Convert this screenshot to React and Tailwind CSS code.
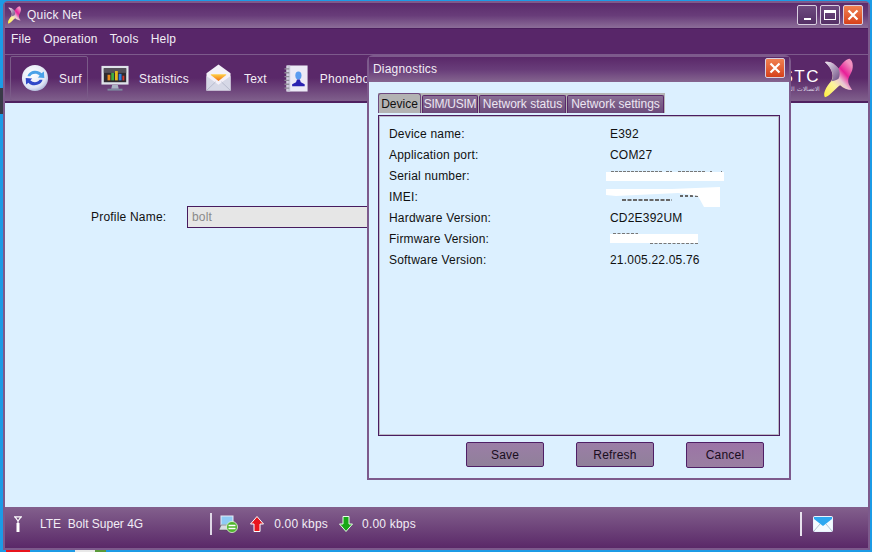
import { useId } from 'react';

function QuickNetLogo({ className }) {
  const id = useId();
  const armId = `${id}arm`;
  return (
    <svg viewBox="0 0 40 50" className={className}>
      <defs>
        <linearGradient id={id} x1="0.1" y1="1" x2="0.85" y2="0.1">
          <stop offset="0" stopColor="#fff04a" />
          <stop offset="0.35" stopColor="#fbf3a0" />
          <stop offset="0.55" stopColor="#e8c4d4" />
          <stop offset="0.75" stopColor="#e81f98" />
          <stop offset="1" stopColor="#f290c0" />
        </linearGradient>
        <linearGradient id={armId} x1="0" y1="0" x2="1" y2="1">
          <stop offset="0" stopColor="#efe8f2" />
          <stop offset="1" stopColor="#6a4a80" />
        </linearGradient>
      </defs>
      <path d="M3 5 C10 3 16 8 20 13 C24 8 29 1 34 1 C39 4 39 14 35 20 C33 24 31 27 33 33 L37 40 C31 40 26 38 22 34 C16 38 10 47 3 49 C0 44 5 36 10 30 C15 24 13 14 3 5 Z" fill={`url(#${id})`} />
      <path d="M3 5 C10 3 16 8 20 13 C22 18 22 22 20 26 C17 28 14 29 11 29 C15 23 13 14 3 5 Z" fill={`url(#${armId})`} />
    </svg>
  );
}

function SyncIcon() {
  return (
    <svg viewBox="0 0 30 30" className="w-[28px] h-[28px] -ml-[1px]">
      <defs>
        <radialGradient id="syncBall" cx="0.4" cy="0.35" r="0.75">
          <stop offset="0" stopColor="#ffffff" />
          <stop offset="0.7" stopColor="#dfe6f5" />
          <stop offset="1" stopColor="#9aa6cf" />
        </radialGradient>
      </defs>
      <circle cx="15" cy="15" r="14" fill="url(#syncBall)" />
      <path d="M7 13 C8 7 18 5 22 10 L24.5 8 L25 15 L18 14.5 L20 12.5 C17 9.5 12 10 10 13 Z" fill="#4aa2e8" />
      <path d="M23 17 C22 23 12 25 8 20 L5.5 22 L5 15 L12 15.5 L10 17.5 C13 20.5 18 20 20 17 Z" fill="#2f49c8" />
    </svg>
  );
}

function MonitorIcon() {
  return (
    <svg viewBox="0 0 30 28" className="w-[28px] h-[27px]">
      <rect x="0.5" y="0.5" width="29" height="20" fill="#dfe3ea" />
      <rect x="3" y="3" width="24" height="15" fill="#2e2a30" />
      <rect x="3" y="3" width="24" height="5" fill="#55505a" />
      <rect x="7" y="10" width="3" height="6" fill="#e88a1c" />
      <rect x="11" y="8" width="3" height="8" fill="#3fae3f" />
      <rect x="15" y="6" width="3" height="10" fill="#e8b81c" />
      <rect x="19" y="9" width="3" height="7" fill="#2f7de0" />
      <rect x="23" y="11" width="2" height="5" fill="#d8352c" />
      <path d="M12 21 H18 L19 25 H11 Z" fill="#aab4c4" />
      <rect x="7" y="25" width="16" height="2" fill="#7f8aa0" />
    </svg>
  );
}

function MailOpenIcon() {
  return (
    <svg viewBox="0 0 26 28" className="w-[25px] h-[28px]">
      <defs>
        <linearGradient id="mailFold" x1="0" y1="0" x2="0" y2="1">
          <stop offset="0" stopColor="#ffd24a" />
          <stop offset="1" stopColor="#f0700f" />
        </linearGradient>
      </defs>
      <path d="M13 0 L25.5 9 V27 H0.5 V9 Z" fill="#f3f0f8" />
      <path d="M5 10 H21 V11 L13 17 L5 11 Z" fill="url(#mailFold)" />
      <path d="M0.5 12 L13 21 L25.5 12 V27 H0.5 Z" fill="#d6d8e6" />
      <path d="M0.5 27 L10 18 M25.5 27 L16 18" stroke="#aeb2c6" strokeWidth="0.8" />
    </svg>
  );
}

function PhonebookIcon() {
  return (
    <svg viewBox="0 0 26 28" className="w-[26px] h-[27px]">
      <rect x="3" y="0.5" width="22" height="27" fill="#eceaf6" />
      <rect x="4" y="0.5" width="3" height="27" fill="#c8c8d8" />
      <path d="M1 4 H6 M1 8 H6 M1 12 H6 M1 16 H6 M1 20 H6 M1 24 H6" stroke="#8d8a96" strokeWidth="1.4" />
      <ellipse cx="15.5" cy="11" rx="3.2" ry="4.2" fill="#5b9cf0" />
      <path d="M14 15 H17 L18 18 L22 20 V22 H9 V20 L13 18 Z" fill="#2a22b0" />
    </svg>
  );
}

function NetworkIcon() {
  return (
    <svg viewBox="0 0 20 18" className="w-[20px] h-[18px]">
      <rect x="3" y="1" width="12" height="9" fill="#8ecbf5" stroke="#e8eef5" strokeWidth="1" />
      <path d="M1 15 L3 10 H15 L16 15 Z" fill="#d8dce2" stroke="#444" strokeWidth="0.5" />
      <circle cx="14" cy="12" r="5.5" fill="#4fb52c" stroke="#e8f5df" strokeWidth="0.8" />
      <path d="M10.5 10.5 H17.5 M10.5 13.5 H17.5" stroke="#fff" strokeWidth="1.4" />
    </svg>
  );
}

function Arrow({ down, color, edge }) {
  return (
    <svg viewBox="0 0 14 16" className="w-[14px] h-[16px]">
      <path
        d={down ? 'M4 0.5 H10 V8 H13.5 L7 15.5 L0.5 8 H4 Z' : 'M7 0.5 L13.5 8 H10 V15.5 H4 V8 H0.5 Z'}
        fill={color}
        stroke={edge}
        strokeWidth="1"
      />
    </svg>
  );
}

function WinButton({ children, close }) {
  return (
    <div className={`w-[20px] h-[20px] rounded-[2px] border border-[#d9cfe0] flex items-center justify-center ${close ? 'bg-gradient-to-b from-[#f08050] to-[#d6401a]' : 'bg-gradient-to-b from-[#6d4a7e] to-[#553066]'}`}>
      {children}
    </div>
  );
}

function CloseGlyph() {
  return (
    <svg viewBox="0 0 12 12" className="w-[12px] h-[12px]">
      <path d="M1.5 1.5 L10.5 10.5 M10.5 1.5 L1.5 10.5" stroke="#fff" strokeWidth="2.2" />
    </svg>
  );
}

// white scribbles over the private values, a few pixels of the text still show
function Redaction({ kind }) {
  if (kind === 'serial') {
    return (
      <svg viewBox="0 0 118 12" className="w-[118px] h-[12px] -ml-[4px]">
        <path d="M5 1.5 H56 M60 1.5 H66 M72 1.5 H100 M104 1.5 H106 M115 1.5 H116" stroke="#777" strokeWidth="1" strokeDasharray="3 1" />
        <rect x="0" y="2" width="118" height="9" fill="#fff" />
      </svg>
    );
  }
  if (kind === 'imei') {
    return (
      <svg viewBox="0 0 116 21" className="w-[116px] h-[21px] -ml-[4px] -my-[5px] relative top-[1px]">
        <path d="M16 13 H66" stroke="#666" strokeWidth="2" strokeDasharray="4 1.5" />
        <path d="M74 9 H100" stroke="#666" strokeWidth="2" strokeDasharray="3 2" />
        <path d="M0 2 L66 2 L114 0 L114 20 L98 20 L92 9 L72 6 L10 9 L0 8 Z" fill="#fff" />
      </svg>
    );
  }
  return (
    <svg viewBox="0 0 88 13" className="w-[88px] h-[13px]">
      <path d="M3 1.5 H28 M40 11.5 H88" stroke="#777" strokeWidth="1" strokeDasharray="3 1.5" />
      <rect x="0" y="2" width="88" height="9" fill="#fff" />
    </svg>
  );
}

const rows = [
  ['Device name:', 'E392'],
  ['Application port:', 'COM27'],
  ['Serial number:', null, 'serial'],
  ['IMEI:', null, 'imei'],
  ['Hardware Version:', 'CD2E392UM'],
  ['Firmware Version:', null, 'firmware'],
  ['Software Version:', '21.005.22.05.76'],
];

const tabs = [
  { name: 'SIM/USIM', cls: 'w-[56px] tracking-[-0.3px]' },
  { name: 'Network status', cls: 'w-[87px]' },
  { name: 'Network settings', cls: 'w-[97px]' },
];

export default function App() {
  return (
    <div className="relative w-[872px] h-[552px] overflow-hidden bg-[#1c9be6] pl-[3px] pt-[1px] pr-[2px] pb-[2px] font-['Liberation_Sans',Arial,sans-serif] text-[12px] tracking-[0.2px]">
      {/* bits of the desktop showing around the window */}
      <div className="absolute left-0 top-[88px] w-[3px] h-[26px] bg-[#3a3a48]" />
      <div className="absolute left-[6px] top-[550px] w-[24px] h-[2px] bg-[#e8141c]" />
      <div className="absolute left-[75px] top-[550px] w-[20px] h-[2px] bg-[#e8e8e8]" />
      <div className="absolute left-[95px] top-[550px] w-[11px] h-[2px] bg-[#5a9a3a]" />

      <div className="relative h-full flex flex-col border-2 border-[#7d5a8c] rounded-t-[5px] bg-[#dcf0ff]">
        <div className="h-[25px] shrink-0 flex items-center pl-[2px] pr-[5px] pb-[2px] bg-gradient-to-b from-[#5b2b6c] via-[#683c79] to-[#8c6d98]">
          <QuickNetLogo className="w-[15px] h-[18px]" />
          <span className="ml-[5px] mt-[1px] text-[#f2edf5]">Quick Net</span>
          <div className="ml-auto flex gap-[3px]">
            <WinButton><div className="w-[7px] h-[2px] bg-white mt-[8px]" /></WinButton>
            <WinButton><div className="w-[12px] h-[10px] border border-white border-t-[3px]" /></WinButton>
            <WinButton close><CloseGlyph /></WinButton>
          </div>
        </div>
        <div className="h-[26px] shrink-0 flex items-center gap-[12px] pl-[6px] pb-[6px] bg-[#582669] border-t border-[#4a1c5c] text-[#f2edf5]">
          <span>File</span>
          <span>Operation</span>
          <span>Tools</span>
          <span>Help</span>
        </div>
        <div className="h-[49px] shrink-0 flex items-center pl-[5px] bg-gradient-to-b from-[#5a2869] from-50% to-[#80608c] border-t border-[#7d5a8c] border-b-2 border-b-[#4f2160] text-[#f2edf5]">
          <div className="w-[78px] h-[45px] flex items-center rounded-[2px] border border-[#7a5a88] pl-[11px]">
            <SyncIcon />
            <span className="ml-[10px] mt-[2px]">Surf</span>
          </div>
          <div className="ml-[13px]"><MonitorIcon /></div>
          <span className="ml-[10px] mt-[2px]">Statistics</span>
          <div className="ml-[17px]"><MailOpenIcon /></div>
          <span className="ml-[13px] mt-[2px]">Text</span>
          <div className="ml-[16px]"><PhonebookIcon /></div>
          <span className="ml-[11px] mt-[2px]">Phonebook</span>
          <div className="ml-auto flex items-center pr-[13px]">
            <div className="flex flex-col items-end mr-[2px] mt-[4px]">
              <span className="text-[17px] leading-[17px] text-white tracking-[1.5px]">STC</span>
              <span className="text-[6px] leading-[8px] tracking-normal text-[#d8cfe0] font-['Noto_Sans',sans-serif]">الاتصالات السعودية</span>
            </div>
            <QuickNetLogo className="w-[33px] h-[40px]" />
          </div>
        </div>
        <div className="flex-1 flex items-start pt-[103px] pl-[86px]">
          <span className="text-[#111] w-[96px] leading-[23px]">Profile Name:</span>
          <div className="w-[230px] h-[22px] bg-[#e6e6e6] border border-[#471b5e] pl-[4px] leading-[20px] text-[#8a8a8a]">bolt</div>
        </div>
        <div className="h-[41px] shrink-0 flex items-center pl-[8px] pb-[8px] bg-gradient-to-b from-[#83608d] to-[#5a2868] text-[#f2edf5]">
          <svg viewBox="0 0 8 16" className="w-[8px] h-[16px] ml-[1px] mr-[1px]">
            <path d="M0 0.8 H8 M1 0.8 L4 5 L7 0.8 M4 5 V16" stroke="#fff" strokeWidth="1.2" fill="none" />
            <rect x="2.5" y="7" width="3" height="9" fill="#fff" />
          </svg>
          <span className="ml-[17px] whitespace-pre tracking-normal">LTE  Bolt Super 4G</span>
          <div className="ml-[67px] w-[2px] h-[22px] bg-[#dfd8e6]" />
          <div className="ml-[6px]"><NetworkIcon /></div>
          <div className="ml-[12px]"><Arrow color="#e8141c" edge="#fff" /></div>
          <span className="ml-[10px]">0.00 kbps</span>
          <div className="ml-[11px]"><Arrow down color="#18a818" edge="#e8ffe8" /></div>
          <span className="ml-[9px]">0.00 kbps</span>
          <div className="ml-auto w-[2px] h-[24px] bg-[#e8e3ee]" />
          <svg viewBox="0 0 20 16" className="ml-[11px] mr-[35px] w-[20px] h-[16px]">
            <rect x="0.5" y="0.5" width="19" height="15" rx="1" fill="#f4fbff" stroke="#e8f4ff" />
            <path d="M1 1 H19 V3 L10 10 L1 3 Z" fill="#2ea8f0" />
            <path d="M1 15 L7 8 M19 15 L13 8" stroke="#9fb6c8" strokeWidth="0.8" />
          </svg>
        </div>
      </div>

      {/* Diagnostics dialog floats over the main window */}
      <div className="absolute left-[367px] top-[55px] w-[424px] h-[425px] flex flex-col border-2 border-[#7d5a8c] rounded-t-[6px] bg-[#dcf0ff]">
        <div className="h-[25px] shrink-0 flex items-center justify-between pl-[4px] pr-[4px] pb-[3px] bg-gradient-to-b from-[#5a2869] via-[#683c79] to-[#85658f] text-[#f2edf5]">
          <span className="mt-[2px]">Diagnostics</span>
          <WinButton close><CloseGlyph /></WinButton>
        </div>
        <div className="flex-1 flex flex-col pt-[11px] pl-[9px] pr-[10px]">
          <div className="self-start flex items-end h-[20px] bg-[#b5b5b5] pr-[1px] tracking-normal">
            <div className="w-[43px] h-[20px] flex items-center justify-center rounded-t-[3px] border border-b-0 border-[#6e4a80] bg-[#b3b3b3] text-[#111]">Device</div>
            {tabs.map((tab) => (
              <div key={tab.name} className={`${tab.cls} h-[18px] pb-[1px] flex items-center justify-center whitespace-nowrap ml-[1px] border border-b-0 border-[#5a2869] rounded-t-[2px] bg-gradient-to-b from-[#8a7095] to-[#6b4a7a] text-[#ece6f2]`}>{tab.name}</div>
            ))}
          </div>
          <div className="w-[402px] h-[321px] mt-[2px] border border-[#4a1c60] shadow-[inset_0_0_0_1px_#b9b9c6] pt-[7px] pl-[10px]">
            {rows.map(([label, value, patch]) => (
              <div key={label} className="flex items-center h-[21px] text-[#111]">
                <span className="w-[221px]">{label}</span>
                {value ? <span>{value}</span> : <Redaction kind={patch} />}
              </div>
            ))}
          </div>
          <div className="flex items-start gap-[32px] pl-[88px] pt-[6px]">
            <button className="w-[78px] h-[25px] rounded-[2px] border border-[#4f1f66] bg-gradient-to-b from-[#9b7ea6] to-[#90809a] text-[#1a0d20]">Save</button>
            <button className="w-[78px] h-[25px] rounded-[2px] border border-[#4f1f66] bg-gradient-to-b from-[#9b7ea6] to-[#90809a] text-[#1a0d20]">Refresh</button>
            <button className="w-[78px] h-[26px] rounded-[2px] border border-[#4f1f66] bg-gradient-to-b from-[#9c74a6] to-[#9a7fa2] text-[#1a0d20]">Cancel</button>
          </div>
        </div>
      </div>
    </div>
  );
}
